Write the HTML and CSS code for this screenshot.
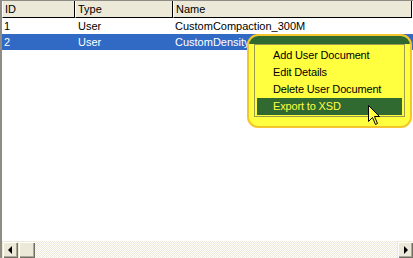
FILE: index.html
```html
<!DOCTYPE html>
<html lang="en">
<head>
    <meta charset="UTF-8">
    <title>User Documents</title>
    <link rel="stylesheet" href="styles.css">
</head>
<body>
    <div class="list">
        <div class="head">
            <div class="col col-id">ID</div>
            <div class="col col-type">Type</div>
            <div class="col col-name">Name</div>
        </div>
        <div class="row">
            <div class="cell col-id">1</div>
            <div class="cell col-type">User</div>
            <div class="cell col-name">CustomCompaction_300M</div>
        </div>
        <div class="row selected">
            <div class="cell col-id">2</div>
            <div class="cell col-type">User</div>
            <div class="cell col-name">CustomDensity</div>
        </div>
        <div class="fill"></div>
        <div class="hscroll">
            <div class="sb-btn"><span class="arrow-left"></span></div>
            <div class="sb-thumb"></div>
            <div class="sb-track"></div>
            <div class="sb-btn"><span class="arrow-right"></span></div>
        </div>
    </div>

    <!-- highlighted context menu -->
    <div class="callout">
        <div class="callout-band"></div>
        <div class="menu">
            <div class="menu-item">Add User Document</div>
            <div class="menu-item">Edit Details</div>
            <div class="menu-item">Delete User Document</div>
            <div class="menu-item active">Export to XSD</div>
        </div>
    </div>

    <svg class="cursor" width="13" height="22" viewBox="0 0 13 22">
        <path d="M0.5 0.5 L0.5 16.5 L4.5 12.5 L7.5 19.5 L9.5 18.5 L6.5 11.5 L11.5 11.5 Z" fill="#ffff40" stroke="#000" stroke-width="1"/>
    </svg>
</body>
</html>
```

FILE: styles.css
```css
body {
    margin: 0;
    padding: 0;
    font-family: 'Liberation Sans', Arial, sans-serif;
    font-size: 11px;
    background-color: #ffffff;
}

.list {
    position: relative;
    width: 413px;
    height: 258px;
    box-sizing: border-box;
    border-top: 1px solid #8e8c84;
    border-left: 2px solid #8e8c84;
    display: flex;
    flex-direction: column;
    background-color: #ffffff;
}

.head {
    display: flex;
    height: 17px;
    flex-shrink: 0;
}

.col {
    box-sizing: border-box;
    height: 17px;
    padding: 2px 0 0 2px;
    background-color: #ece9d8;
    border-left: 1px solid #ffffff;
    border-right: 1px solid #000000;
    border-bottom: 1px solid #000000;
    color: #000000;
}

.col-id {
    width: 73px;
}

.col-type {
    width: 98px;
}

.col-name {
    width: 239px;
}

.row {
    display: flex;
    height: 16px;
    flex-shrink: 0;
    color: #000000;
}

.row:first-of-type {
    margin-top: 1px;
}

.cell {
    box-sizing: border-box;
    padding: 2px 0 0 2px;
    white-space: nowrap;
}

.row .col-type {
    padding-left: 3px;
}

.row.selected {
    background-color: #316ac5;
    color: #ffffff;
}

.fill {
    flex: 1;
}

.hscroll {
    display: flex;
    height: 17px;
    flex-shrink: 0;
}

.sb-btn, .sb-thumb {
    box-sizing: border-box;
    width: 16px;
    height: 17px;
    background-color: #ece9d8;
    box-shadow: inset 1px 1px 0 #ece9d8, inset 2px 2px 0 #ffffff, inset -1px -1px 0 #716f64, inset -2px -2px 0 #aca899;
    display: flex;
    align-items: center;
    justify-content: center;
}

.sb-thumb {
    width: 17px;
}

.sb-track {
    flex: 1;
    background-color: #ffffff;
    background-image: repeating-conic-gradient(#ece9d8 0 25%, #ffffff 0 50%);
    background-size: 2px 2px;
}

.arrow-left {
    width: 0;
    height: 0;
    border-top: 4px solid transparent;
    border-bottom: 4px solid transparent;
    border-right: 4px solid #000000;
    margin-left: -1px;
}

.arrow-right {
    width: 0;
    height: 0;
    border-top: 4px solid transparent;
    border-bottom: 4px solid transparent;
    border-left: 4px solid #000000;
    margin-left: 1px;
}

/* yellow highlight drawn over the menu */
.callout {
    position: absolute;
    left: 247px;
    top: 34px;
    width: 165px;
    height: 94px;
    box-sizing: border-box;
    border: 2px solid #f5c62c;
    border-radius: 11px;
    background-color: #ffff40;
    overflow: hidden;
}

.callout-band {
    height: 8px;
    background-color: #316a31;
}

.menu {
    margin: 0 5px 0 5px;
    border: 1px solid #9c9a4c;
    padding: 2px 2px;
    box-sizing: border-box;
    height: 73px;
}

.menu-item {
    height: 17px;
    line-height: 17px;
    padding-left: 16px;
    color: #000000;
    white-space: nowrap;
    letter-spacing: -0.15px;
}

.menu-item.active {
    background-color: #316a31;
    color: #ffff40;
}

.cursor {
    position: absolute;
    left: 368px;
    top: 105px;
}
```
